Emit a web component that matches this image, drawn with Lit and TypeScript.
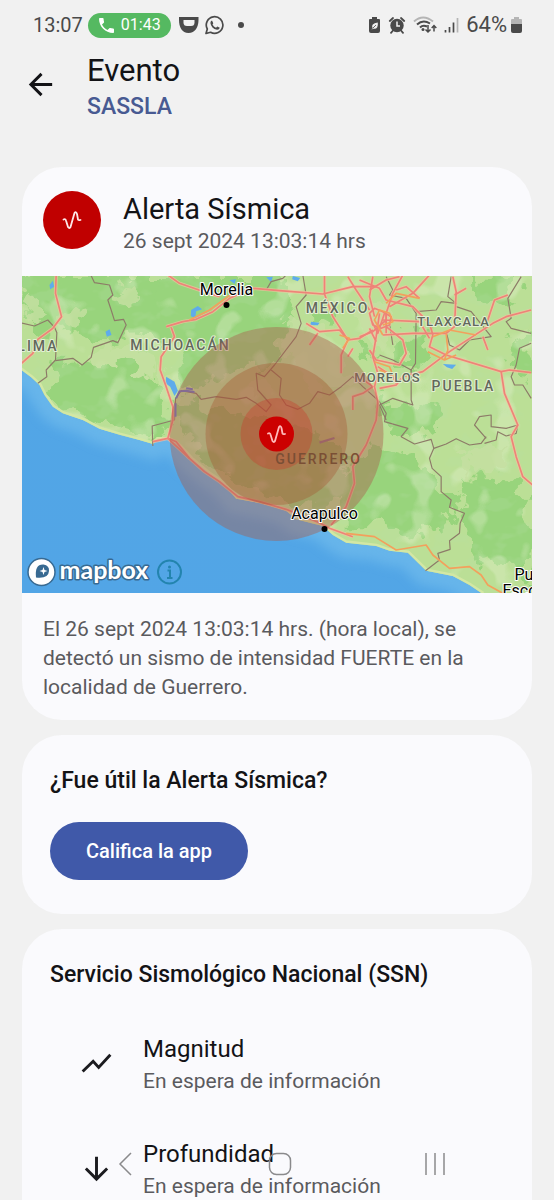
import { LitElement, html, svg, css } from "lit";
import { customElement } from "lit/decorators.js";

const wave = (color: string) => svg`
  <path d="M-8.500 -0.500 Q-6.500 -1.500 -6 0.500 L-4 7 Q-2.500 9 -1.500 7 L2.500 -7 Q4 -9 5 -6 L6 -0.500 Q6.500 0.500 8.500 0"
    fill="none" stroke=${color} stroke-width="1.8" stroke-linecap="round" stroke-linejoin="round"/>`;

@customElement("status-bar")
class StatusBar extends LitElement {
  static styles = css`
    :host {
      display: flex;
      justify-content: space-between;
      align-items: center;
      height: 50px;
      padding: 0 31px 0 33px;
      color: #4a4a4a;
      font-size: 20px;
      line-height: 26px;
    }
    .group { display: flex; align-items: center; gap: 5px; }
    .call {
      display: flex;
      align-items: center;
      gap: 7px;
      height: 25px;
      padding: 0 10px 0 11px;
      border-radius: 13px;
      background: #55b961;
      color: #fff;
      font-size: 16px;
    }
    .dot { width: 6px; height: 6px; margin-left: 8px; border-radius: 50%; background: #4a4a4a; }
    .right { gap: 3px; font-size: 22px; }
    .icons { display: flex; align-items: center; gap: 7px; margin-right: 4px; }
    svg { display: block; }
  `;
  render() {
    return html`
      <div class="group">
        <span>13:07</span>
        <span class="call">
          <svg width="15" height="15" viewBox="3 3 18 18" fill="#fff"><path d="M6.620 10.790c1.440 2.830 3.760 5.140 6.590 6.590l2.200-2.200c.27-.27.67-.36 1.020-.24 1.120.37 2.330.57 3.570.57.55 0 1 .45 1 1V20c0 .55-.45 1-1 1-9.390 0-17-7.610-17-17 0-.55.45-1 1-1h3.500c.55 0 1 .45 1 1 0 1.250.2 2.450.57 3.570.11.35.03.74-.25 1.020l-2.200 2.200z"/></svg>
          <span>01:43</span>
        </span>
        <svg width="24" height="20" viewBox="2 0 24 20"><path d="M5 2H24.500V5C24.500 12 21 18 14.500 18S5 12 5 5Z" fill="#4a4a4a"/><path d="M9.500 5V7.500Q9.500 11 13 11H17Q20.500 11 20.500 7.500V5Z" fill="#f1f1f1"/></svg>
        <svg width="20" height="20" viewBox="0 0 20 20"><path d="M1 18.500L2.300 14A8.300 8.300 0 1 1 5.600 17.300Z" fill="none" stroke="#4a4a4a" stroke-width="1.700" stroke-linejoin="round"/><path d="M7 5.500L8.300 8.200L7.500 9.500Q8.600 11.700 11 12.700L12.300 11.500L14.800 12.800Q14.300 14.900 12 14.800Q6.200 13.500 5.400 8Q5.500 5.900 7 5.500Z" fill="#4a4a4a"/></svg>
        <span class="dot"></span>
      </div>
      <div class="group right">
        <div class="icons">
          <svg width="13" height="18" viewBox="0 0 13 18"><path d="M4 1H9V3H11Q12 3 12 4V15Q12 17 10 17H3Q1 17 1 15V4Q1 3 2 3H4Z" fill="#4a4a4a"/><path d="M3.500 13.500L4.500 12Q2.500 7.500 9.800 6.500Q10.500 13.500 5.500 12.800Z" fill="#f1f1f1"/><path d="M4.500 12.500L8 9" stroke="#4a4a4a" stroke-width=".8"/></svg>
          <svg width="18" height="18" viewBox="0 0 18 18"><circle cx="9" cy="9.500" r="6.700" fill="#4a4a4a"/><path d="M1.800 5L5 2M16.200 5L13 2M5 14.500L3 16.800M13 14.500L15 16.800" stroke="#4a4a4a" stroke-width="1.800" stroke-linecap="round"/><path d="M9 5.500V10H12" fill="none" stroke="#f1f1f1" stroke-width="1.500"/></svg>
          <svg width="24" height="18" viewBox="0 0 24 18" fill="none"><path d="M1 5.500Q10 -2.500 20 5.500" stroke="#b5b5b5" stroke-width="2"/><path d="M4 8.500Q10 3 17 7.500M7 11.500Q10 8.500 14 10.500" stroke="#4a4a4a" stroke-width="2"/><circle cx="10" cy="13.500" r="1.500" fill="#4a4a4a"/><path d="M15 9V15.500M12.500 13.500L15 16L17.500 13.500M21 15.500V10M18.700 12L21 9.500L23.300 12" stroke="#4a4a4a" stroke-width="1.500"/></svg>
          <svg width="15" height="18" viewBox="0 0 15 18" stroke-width="1.700"><path d="M1.500 14V16.500M5.500 11V16.500M9.500 6.500V16.500" stroke="#4a4a4a"/><path d="M13.500 2V16.500" stroke="#b5b5b5"/></svg>
        </div>
        <span>64%</span>
        <svg width="13" height="18" viewBox="0 0 13 18"><path d="M4 1H9V3H11Q12 3 12 4V9H1V4Q1 3 2 3H4Z" fill="#b5b5b5"/><path d="M1 8H12V15Q12 17 10 17H3Q1 17 1 15Z" fill="#4a4a4a"/></svg>
      </div>`;
  }
}

@customElement("event-map")
class EventMap extends LitElement {
  static styles = css`
    :host { display: block; }
    .map { display: block; width: 100%; height: 317px; }
    .state, .city, .brand {
      font-family: Roboto, "Liberation Sans", sans-serif;
      paint-order: stroke;
      stroke-linejoin: round;
    }
    .state { font-size: 14px; font-weight: 500; letter-spacing: 2px; fill: #62685c; stroke: #e3f0d3; stroke-width: 2px; }
    .small { font-size: 13px; letter-spacing: 1px; }
    .over { fill: #7a4f35; stroke: none; }
    .city { font-size: 16px; fill: #000; stroke: #fff; stroke-width: 2px; }
    .brand { font-family: Lato, Roboto, sans-serif; font-size: 25px; font-weight: 700; fill: #fff; stroke: #386a92; stroke-width: 3px; }
    .mid { text-anchor: middle; }
    .end { text-anchor: end; }
  `;
  render() {
    const coast =
      "M0 296L35 322L60 345L75 375L100 410L130 430L190 450L240 476L300 494L360 510L400 522L415 508L450 508L480 528L515 566L570 612L610 638L650 686L725 700L800 722L830 748L910 768L940 795L980 818L1070 828L1110 842L1165 848L1220 902L1300 918L1350 945L1390 972";
    const borders = [
      "M0 158L45 168L85 150L105 172L112 188L108 270L80 300L82 320L55 340",
      "M108 272L160 265L188 285L215 262L222 232L280 212L295 218L320 165L312 148L285 152L275 120L265 90L280 75L270 45L225 38L214 15",
      "M400 528L398 468L465 450L468 385L485 362L530 370L545 388L590 380L650 388L680 382L710 400L740 425L755 405L715 360L710 310L735 320L765 285L830 200L845 160L830 110L860 75L850 15",
      "M755 300L785 325L780 375L800 405L835 418L870 400L895 365L930 375L965 350L1000 320L1030 350L1080 395L1100 430L1095 455L1165 475L1145 500L1185 522L1235 508L1243 535L1280 522L1310 506L1350 525L1385 520L1400 500",
      "M1243 535L1230 565L1238 595L1265 620L1265 665L1295 690L1290 712L1335 730L1322 760L1320 790L1290 812L1292 838L1255 850L1260 870L1218 902",
      "M1100 20L1120 60L1110 75L1160 85L1190 130L1188 280L1175 300L1120 270L1080 255M1190 125L1250 120L1265 95L1310 100L1285 80L1295 20",
      "M1310 110L1355 125L1415 200L1350 210L1320 240L1290 225L1280 185M1175 300L1175 390L1180 405L1120 385L1080 405L1100 450",
      "M1505 20L1465 85L1475 145L1460 155L1475 175L1535 190M1535 220L1500 235L1490 285L1475 320L1485 345L1510 345L1535 385",
      "M1400 505L1365 465L1380 440L1415 435L1415 470L1460 475L1495 465L1490 490L1460 498L1435 485L1430 510L1395 520",
      "M740 60L755 35L790 25L800 15M1110 160L1120 225"
    ];
    const roads = [
      "M110 15L108 70L126 140L100 175L55 208L40 250L0 285",
      "M445 15L480 40L545 62L600 80M440 170L490 155L530 148L580 125L630 85L700 55L780 62L910 72L1000 50L1070 50",
      "M455 172L465 200L425 260L422 300L440 350L460 410L460 450L445 505L400 515",
      "M445 505L510 565L555 605L600 635L655 680L720 695L800 718L900 758L930 775L1000 800",
      "M510 565L470 515L445 505M915 15L915 72L940 140L985 210L965 255L965 310M985 20L1010 60L1050 120",
      "M860 160L900 185L960 180L985 210L1020 205L1060 180M870 225L895 190M1000 235L985 260",
      "M1080 130L1070 200L1060 260L1075 310L1065 350L1075 395L1070 450L1040 525L1000 590L1005 640L980 710L935 765",
      "M1020 320L1060 350L1030 370L1000 380L1000 420M1080 355L1130 345L1150 320L1210 305L1250 275L1290 245L1420 160L1460 140L1535 120",
      "M1020 30L1080 55L1100 90L1180 110L1230 160L1240 195L1230 230L1280 255L1445 305L1470 300L1535 308",
      "M1445 305L1455 370L1495 465L1475 500L1490 560L1510 620L1545 650",
      "M1150 15L1120 70L1100 130L1100 190M1230 15L1180 70L1110 110M1300 20L1310 65L1305 170L1280 190L1180 190L1090 195",
      "M1090 150L1200 155L1230 205M1400 165L1425 90L1465 75M1390 200L1405 240M1305 75L1340 55",
      "M1060 20L1050 80L1065 140M1100 170L1150 210L1160 250L1140 285L1070 270L1050 240M1075 290L1120 320L1130 340",
      "M1020 200L1060 185L1100 150M1130 60L1160 50L1200 85M1050 60L1100 30L1140 20",
      "M1050 130L1065 115L1090 125L1115 140L1110 165L1085 175L1060 165ZM1055 150L1075 190L1095 130M1100 125V165M1050 175L1070 215"
    ];
    const orange = [
      "M510 150L570 120L650 62M970 235L990 205L960 195M1100 100L1130 70L1200 85M1280 190L1285 240L1275 270M1225 245L1275 270L1310 255",
      "M980 790L1065 800L1130 840L1220 825L1240 855L1290 895L1350 890L1385 915L1405 945L1450 970",
      "M1090 195L1065 150L1080 120L1110 130L1120 155L1090 165M1240 200L1290 180L1370 195M1065 275L1110 290L1120 315L1080 300"
    ];
    const lush = [
      "M0 15H430L520 60L510 150L400 190L330 200L240 220L110 180L60 190L0 140Z",
      "M110 280L220 270L300 280L380 300L430 340L450 440L440 500L300 480L140 420L90 360Z",
      "M400 15H800L820 150L760 280L640 300L560 350L500 360L470 250L420 180Z",
      "M470 400L620 420L760 440L900 500L990 560L970 640L900 720L720 670L610 610L520 540Z",
      "M1100 380L1180 410L1260 395L1250 480L1160 500L1085 450Z",
      "M960 640L1060 520L1180 560L1250 650L1330 690L1300 760L1180 800L1080 760L980 760Z",
      "M1330 630L1460 620L1530 690L1545 960L1480 890L1380 860L1340 780Z",
      "M1150 200L1220 200L1235 260L1180 310L1140 280Z",
      "M1340 20H1500L1470 110L1390 100Z",
      "M1460 200L1545 220V320L1480 300Z",
      "M880 100L950 130L930 170L860 140ZM1020 230L1060 250L1030 290Z"
    ];
    const pale = [
      "M20 80L70 100L60 160L10 170ZM130 120L190 110L160 170L120 160ZM290 60L340 50L350 95L300 110Z",
      "M225 230L320 220L400 260L410 310L340 290L240 270Z",
      "M800 150L900 180L980 260L1000 340L900 370L840 300L790 260Z",
      "M420 290L480 320L500 370L460 400L430 350ZM1000 110L1100 90L1130 190L1080 240L1020 180Z",
      "M700 320L790 350L770 400L690 390ZM1390 510L1450 530L1440 600L1360 620L1330 560Z"
    ];
    const water = [
      "M90 45L100 32L104 50L92 58ZM258 185L270 178L276 195L262 200Z",
      "M515 120L535 108L548 118L530 124L528 138L545 140L530 148L514 138Z",
      "M440 320L465 335L475 362L465 378L452 350L438 340ZM740 22L760 20L755 36ZM820 18L842 24L835 34L818 28Z",
      "M875 155L900 158L895 166L872 165ZM1270 282L1310 284L1298 297L1282 292ZM630 30L650 28L645 42Z"
    ];
    return html`
      <svg class="map" viewBox="0 0 511 317" preserveAspectRatio="xMidYMid slice" role="img" aria-label="Mapa del epicentro en Guerrero">
        <defs>
          <linearGradient id="sea" x1="0" y1="1" x2=".5" y2="0">
            <stop offset="0" stop-color="#52a5e6"/><stop offset=".7" stop-color="#52a6e6"/><stop offset="1" stop-color="#67b5ec"/>
          </linearGradient>
          <clipPath id="land"><path d="${coast}L1560 972V0H0Z"/></clipPath>
          <filter id="ragged" x="-5%" y="-5%" width="110%" height="110%">
            <feTurbulence type="fractalNoise" baseFrequency=".02" numOctaves="3" seed="4"/>
            <feDisplacementMap in="SourceGraphic" scale="110" xChannelSelector="R" yChannelSelector="G"/>
          </filter>
          <filter id="relief" x="0" y="0" width="100%" height="100%">
            <feTurbulence type="fractalNoise" baseFrequency=".013 .018" numOctaves="3" seed="11"/>
            <feColorMatrix values="0 0 0 0 .46  0 0 0 0 .72  0 0 0 0 .37  9 0 0 0 -4.900"/>
            <feComponentTransfer><feFuncA type="linear" slope=".22"/></feComponentTransfer>
          </filter>
          <filter id="valleys" x="0" y="0" width="100%" height="100%">
            <feTurbulence type="fractalNoise" baseFrequency=".012" numOctaves="2" seed="27"/>
            <feColorMatrix values="0 0 0 0 .78  0 0 0 0 .88  0 0 0 0 .63  0 9 0 0 -5.200"/>
            <feComponentTransfer><feFuncA type="linear" slope=".35"/></feComponentTransfer>
          </filter>
          <filter id="shoal" filterUnits="userSpaceOnUse" x="-60" y="200" width="1600" height="900"><feGaussianBlur stdDeviation="16"/></filter>
        </defs>
        <g transform="scale(.33333) translate(-6 -18)">
          <rect width="1560" height="990" fill="url(#sea)"/>
          <path d=${coast} fill="none" stroke="#7cc4ef" stroke-width="90" opacity=".5" filter="url(#shoal)"/>
          <g clip-path="url(#land)">
            <rect width="1560" height="990" fill="#bbdf96"/>
            <g filter="url(#ragged)" fill="#98d47c">${lush.map((d) => svg`<path d=${d}/>`)}</g>
            <rect width="1560" height="990" filter="url(#relief)"/>
            <rect width="1560" height="990" filter="url(#valleys)"/>
            <g filter="url(#ragged)" fill="#c6e0a2" opacity=".8">${pale.map((d) => svg`<path d=${d}/>`)}</g>
            <path d=${coast} fill="none" stroke="#d3e7a4" stroke-width="14"/>
          </g>
          <g fill="#5eaceb">${water.map((d) => svg`<path d=${d}/>`)}</g>
          <g fill="none" stroke="#8d7b68" stroke-width="3.500" stroke-linejoin="round">${borders.map((d) => svg`<path d=${d}/>`)}</g>
          <g fill="none" stroke="#f5c4a0" stroke-width="10" stroke-linejoin="round" opacity=".7">${roads.map((d) => svg`<path d=${d}/>`)}</g>
          <g fill="none" stroke="#ee8378" stroke-width="5" stroke-linejoin="round">${roads.map((d) => svg`<path d=${d}/>`)}</g>
          <g fill="none" stroke="#f3a05c" stroke-width="5" stroke-linejoin="round">${orange.map((d) => svg`<path d=${d}/>`)}</g>
          <path d="M470 385L480 364L500 362L525 366M500 355L520 358M468 440V400" fill="none" stroke="#6b77c8" stroke-width="6"/>
          <path d="M900 518L925 510L945 504" fill="none" stroke="#8f7fae" stroke-width="7"/>
        </g>
        <text class="state end" x="37" y="75">COLIMA</text>
        <text class="state mid" x="159" y="74">MICHOACÁN</text>
        <text class="state mid" x="316" y="37">MÉXICO</text>
        <text class="state small mid" x="432" y="50">TLAXCALA</text>
        <text class="state small mid" x="366" y="106">MORELOS</text>
        <text class="state mid" x="442" y="115">PUEBLA</text>
        <circle cx="255" cy="158" r="107" fill="#aa5a4b" fill-opacity=".42"/>
        <circle cx="255" cy="158" r="71" fill="#a5502d" fill-opacity=".34"/>
        <circle cx="255" cy="158" r="36" fill="#c83c2d" fill-opacity=".38"/>
        <text class="state over mid" x="297" y="188">GUERRERO</text>
        <circle cx="255" cy="158" r="17.500" fill="#cc0000"/>
        <g transform="translate(255 158)">${wave("#fbb")}</g>
        <text class="city mid" x="205" y="19">Morelia</text>
        <circle cx="205" cy="29" r="3"/>
        <text class="city mid" x="303" y="243">Acapulco</text>
        <circle cx="303" cy="253" r="3"/>
        <text class="city" x="493" y="304">Puerto</text>
        <text class="city" x="481" y="320">Escondido</text>
        <circle cx="20" cy="296" r="13.500" fill="#fff" stroke="#386a92" stroke-width="1.500"/>
        <path d="M14.500 301.500Q13 288 22 288.500Q28 289.500 27.500 295Q27 303 14.500 301.500Z" fill="#386a92"/>
        <path d="M22 291L23 294L26 295L23 296L22 299L21 296L18 295L21 294Z" fill="#fff"/>
        <text class="brand" x="38" y="303">mapbox</text>
        <g stroke="#2384ae" stroke-width="2" fill="none"><circle cx="148" cy="296" r="11.500"/><path d="M146 294.500H148.500V302M145.500 302H151"/></g>
        <circle cx="148" cy="291" r="1.500" fill="#2384ae"/>
      </svg>`;
  }
}

@customElement("app-root")
class AppRoot extends LitElement {
  static styles = css`
    :host {
      display: flex;
      flex-direction: column;
      height: 100vh;
      overflow: hidden;
      background: #f1f1f1;
      color: #131316;
      font-family: Roboto, "Liberation Sans", sans-serif;
    }
    h1, h2, p, dl, dd, dt { margin: 0; font-weight: 400; }
    svg { display: block; }
    .bar { display: flex; align-items: flex-start; gap: 29px; padding: 3px 23px 42px; }
    .back { display: block; padding: 14px 0 0; border: 0; background: none; cursor: pointer; }
    .title { font-size: 31px; line-height: 36px; }
    .app { font-size: 23px; line-height: 36px; font-weight: 500; color: #485a92; }
    .content {
      flex: 1;
      min-height: 0;
      display: flex;
      flex-direction: column;
      gap: 15px;
      padding: 0 22px;
      overflow-y: auto;
      scrollbar-width: none;
    }
    .card { flex: none; border-radius: 40px; background: #fafafd; overflow: hidden; }
    .head { display: flex; gap: 22px; padding: 24px 21px 21px; }
    .badge { display: block; width: 58px; height: 58px; }
    .name { font-size: 29px; line-height: 36px; }
    .muted { font-size: 21px; line-height: 28px; color: #5a5a5e; }
    .text { font-size: 21px; line-height: 29px; color: #5a5a5e; padding: 22px 21px 18px; }
    .padded { padding: 29px 28px 34px; }
    .section { font-size: 23px; line-height: 34px; font-weight: 500; }
    .rate {
      display: block;
      height: 58px;
      margin-top: 24px;
      padding: 0 36px;
      border: 0;
      border-radius: 29px;
      background: #4059a9;
      color: #fff;
      font: 500 20px/28px Roboto, "Liberation Sans", sans-serif;
      cursor: pointer;
    }
    .list { margin-top: 19px; }
    .item { display: grid; grid-template-columns: 36px 1fr; align-items: center; gap: 29px; padding: 20px 28px 21px; }
    .icon { justify-self: end; }
    .label { font-size: 24px; line-height: 36px; }
    .nav {
      position: absolute;
      left: 0;
      right: 0;
      bottom: 0;
      display: grid;
      grid-template-columns: repeat(3, 1fr);
      height: 72px;
      padding: 0 41px 0 47px;
      pointer-events: none;
    }
    .key { display: grid; place-items: center; padding: 0; border: 0; background: none; pointer-events: auto; }
  `;
  private item(label: string, icon: unknown) {
    return html`<div class="item">
      <svg class="icon" width="35" height="35" viewBox="0 0 24 24" fill="none" stroke="#1b1b1f" stroke-width="2" aria-hidden="true">${icon}</svg>
      <dl><dt class="label">${label}</dt><dd class="muted">En espera de información</dd></dl>
    </div>`;
  }
  render() {
    return html`
      <status-bar></status-bar>
      <header class="bar">
        <button class="back" aria-label="Atrás">
          <svg width="35" height="35" viewBox="0 0 24 24" fill="none" stroke="#131316" stroke-width="2"><path d="M20 12H5M12.700 4.700L5.400 12L12.700 19.300"/></svg>
        </button>
        <div>
          <h1 class="title">Evento</h1>
          <p class="app">SASSLA</p>
        </div>
      </header>
      <main class="content">
        <section class="card">
          <div class="head">
            <svg class="badge" viewBox="-29 -29 58 58" aria-hidden="true"><circle r="29" fill="#c00000"/>${wave("#fde8e8")}</svg>
            <div>
              <h2 class="name">Alerta Sísmica</h2>
              <p class="muted">26 sept 2024 13:03:14 hrs</p>
            </div>
          </div>
          <event-map></event-map>
          <p class="text">El 26 sept 2024 13:03:14 hrs. (hora local), se detectó un sismo de intensidad FUERTE en la localidad de Guerrero.</p>
        </section>
        <section class="card padded">
          <h2 class="section">¿Fue útil la Alerta Sísmica?</h2>
          <button class="rate">Califica la app</button>
        </section>
        <section class="card padded">
          <h2 class="section">Servicio Sismológico Nacional (SSN)</h2>
          <div class="list">
            ${this.item("Magnitud", svg`<path d="M2.500 17.500L9.700 10.500L13.500 14.700L21.500 6"/>`)}
            ${this.item("Profundidad", svg`<path d="M12 4V19M4.700 12L12 19.300L19.300 12"/>`)}
          </div>
        </section>
      </main>
      <nav class="nav">
        <button class="key" aria-label="Volver"><svg width="14" height="24" viewBox="0 0 14 24"><path d="M13 1L2 12L13 23" fill="none" stroke="#8a8a8c" stroke-width="1.500"/></svg></button>
        <button class="key" aria-label="Inicio"><svg width="24" height="24" viewBox="0 0 24 24"><rect x="1.500" y="1.500" width="21" height="21" rx="7" fill="none" stroke="#8a8a8c" stroke-width="1.500"/></svg></button>
        <button class="key" aria-label="Recientes"><svg width="22" height="24" viewBox="0 0 22 24"><path d="M2 1V23M11 1V23M20 1V23" fill="none" stroke="#8a8a8c" stroke-width="1.500"/></svg></button>
      </nav>`;
  }
}
